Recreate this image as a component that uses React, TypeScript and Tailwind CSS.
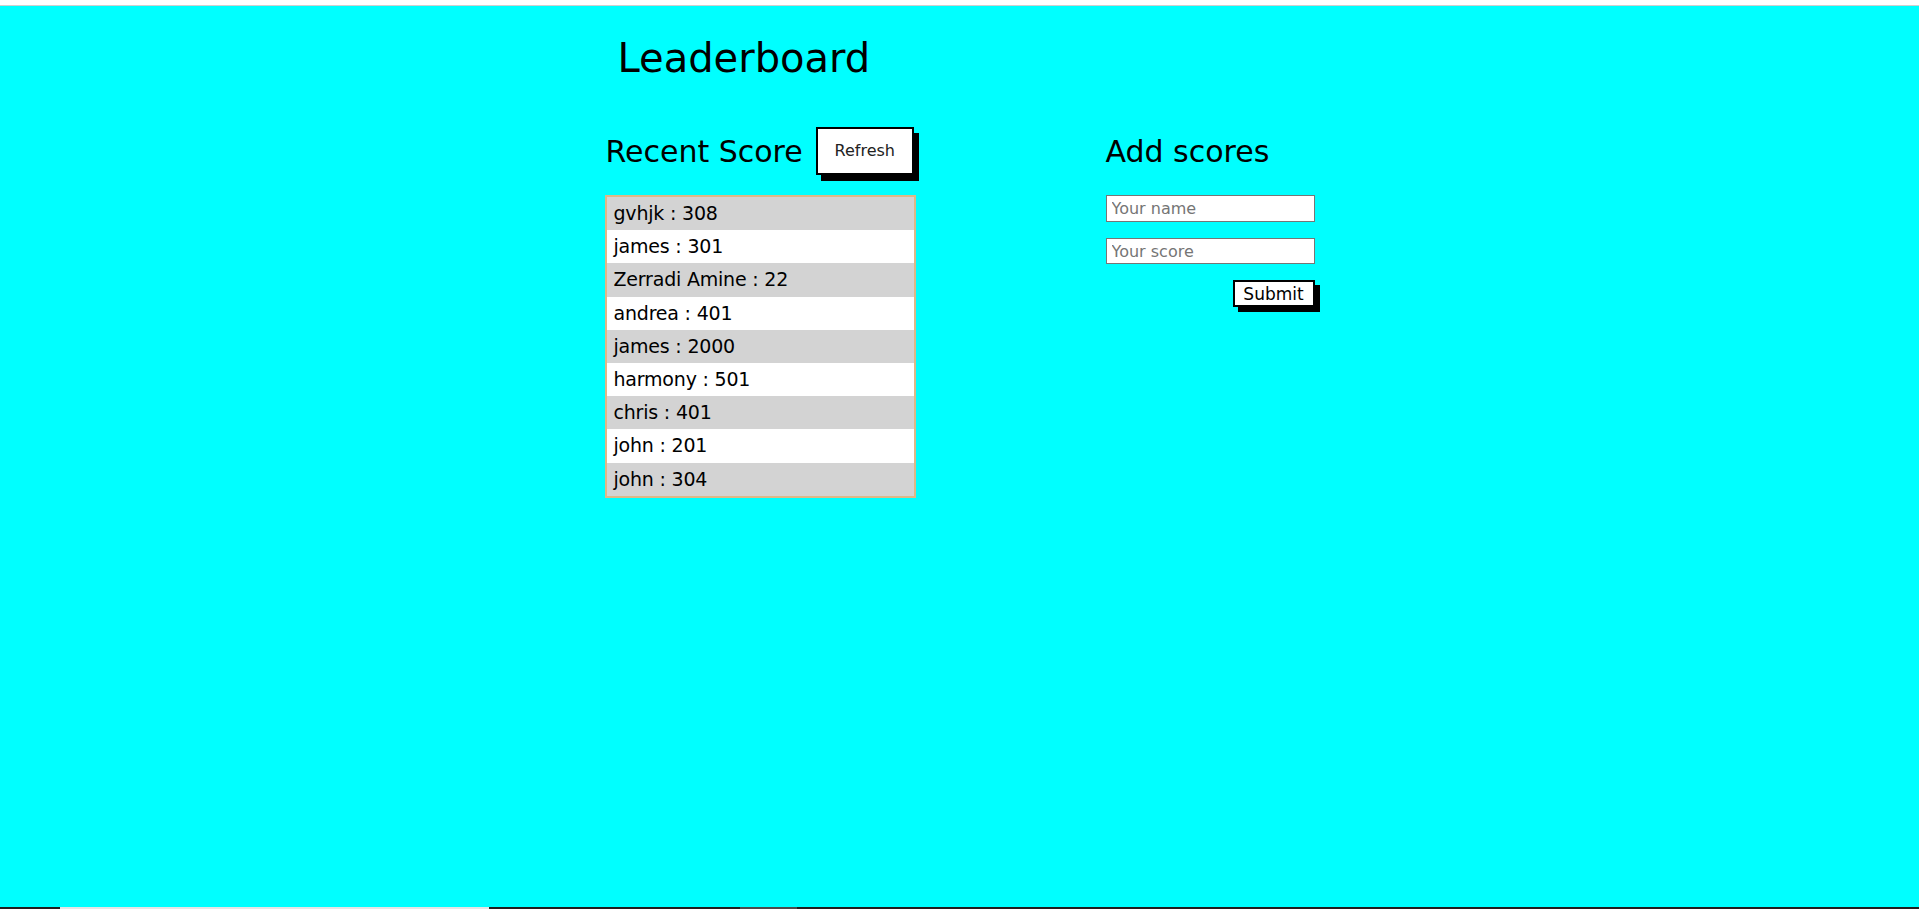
import React from "react";

const scores = [
  { name: "gvhjk", score: 308 },
  { name: "james", score: 301 },
  { name: "Zerradi Amine", score: 22 },
  { name: "andrea", score: 401 },
  { name: "james", score: 2000 },
  { name: "harmony", score: 501 },
  { name: "chris", score: 401 },
  { name: "john", score: 201 },
  { name: "john", score: 304 },
];

const App = () => (
  <div className="h-screen flex flex-col bg-[#00ffff] font-['DejaVu_Sans',sans-serif] text-black">
    <div className="h-[6px] bg-white border-b border-[#cfcfcf]" />

    <main className="flex-1 flex justify-center">
      <div className="w-[710px] mt-[28px]">
        <h1 className="pl-[13px] text-[40px] leading-[48px] font-normal">Leaderboard</h1>

        <div className="mt-[45px] flex">
          {/* recent scores */}
          <section className="w-[311px] shrink-0 flex flex-col">
            <div className="h-[48px] flex items-center">
              <h2 className="pl-[1px] text-[30px] font-normal whitespace-nowrap">Recent Score</h2>
              <button className="ml-[13px] shrink-0 h-[48px] w-[98px] border-2 border-black bg-white text-[16px] text-[#222] shadow-[5px_6px_0_#000]">
                Refresh
              </button>
            </div>
            <ul className="mt-[20px] border-2 border-[#deb887]">
              {scores.map((s, i) => (
                <li
                  key={i}
                  className={`pl-[7px] text-[19px] tracking-[-0.2px] leading-[33.2px] ${
                    i % 2 === 0 ? "bg-[#d3d3d3]" : "bg-white"
                  }`}
                >
                  {s.name} : {s.score}
                </li>
              ))}
            </ul>
          </section>

          {/* add score form */}
          <section className="ml-[190px] w-[209px] shrink-0 flex flex-col">
            <div className="h-[48px] flex items-center">
              <h2 className="text-[30px] font-normal whitespace-nowrap">Add scores</h2>
            </div>
            <form className="mt-[20px] flex flex-col gap-[16px]">
              <input
                type="text"
                placeholder="Your name"
                className="h-[27px] w-[209px] border border-[#767676] bg-white px-[5px] text-[16px] placeholder:text-[#757575] outline-none"
              />
              <input
                type="text"
                placeholder="Your score"
                className="h-[26px] w-[209px] border border-[#767676] bg-white px-[5px] text-[16px] placeholder:text-[#757575] outline-none"
              />
              <div className="flex justify-end">
                <button
                  type="button"
                  className="h-[27px] w-[82px] border-2 border-black bg-white text-[17px] shadow-[5px_5px_0_#000]"
                >
                  Submit
                </button>
              </div>
            </form>
          </section>
        </div>
      </div>
    </main>

    <div className="h-[2px] flex">
      <div className="w-[60px] bg-[#1e1e1e]" />
      <div className="w-[429px] bg-[#e6e6e6]" />
      <div className="w-[251px] bg-[#1e1e1e]" />
      <div className="w-[57px] bg-[#4b4b4b]" />
      <div className="flex-1 bg-[#1e1e1e]" />
    </div>
  </div>
);

export default App;
